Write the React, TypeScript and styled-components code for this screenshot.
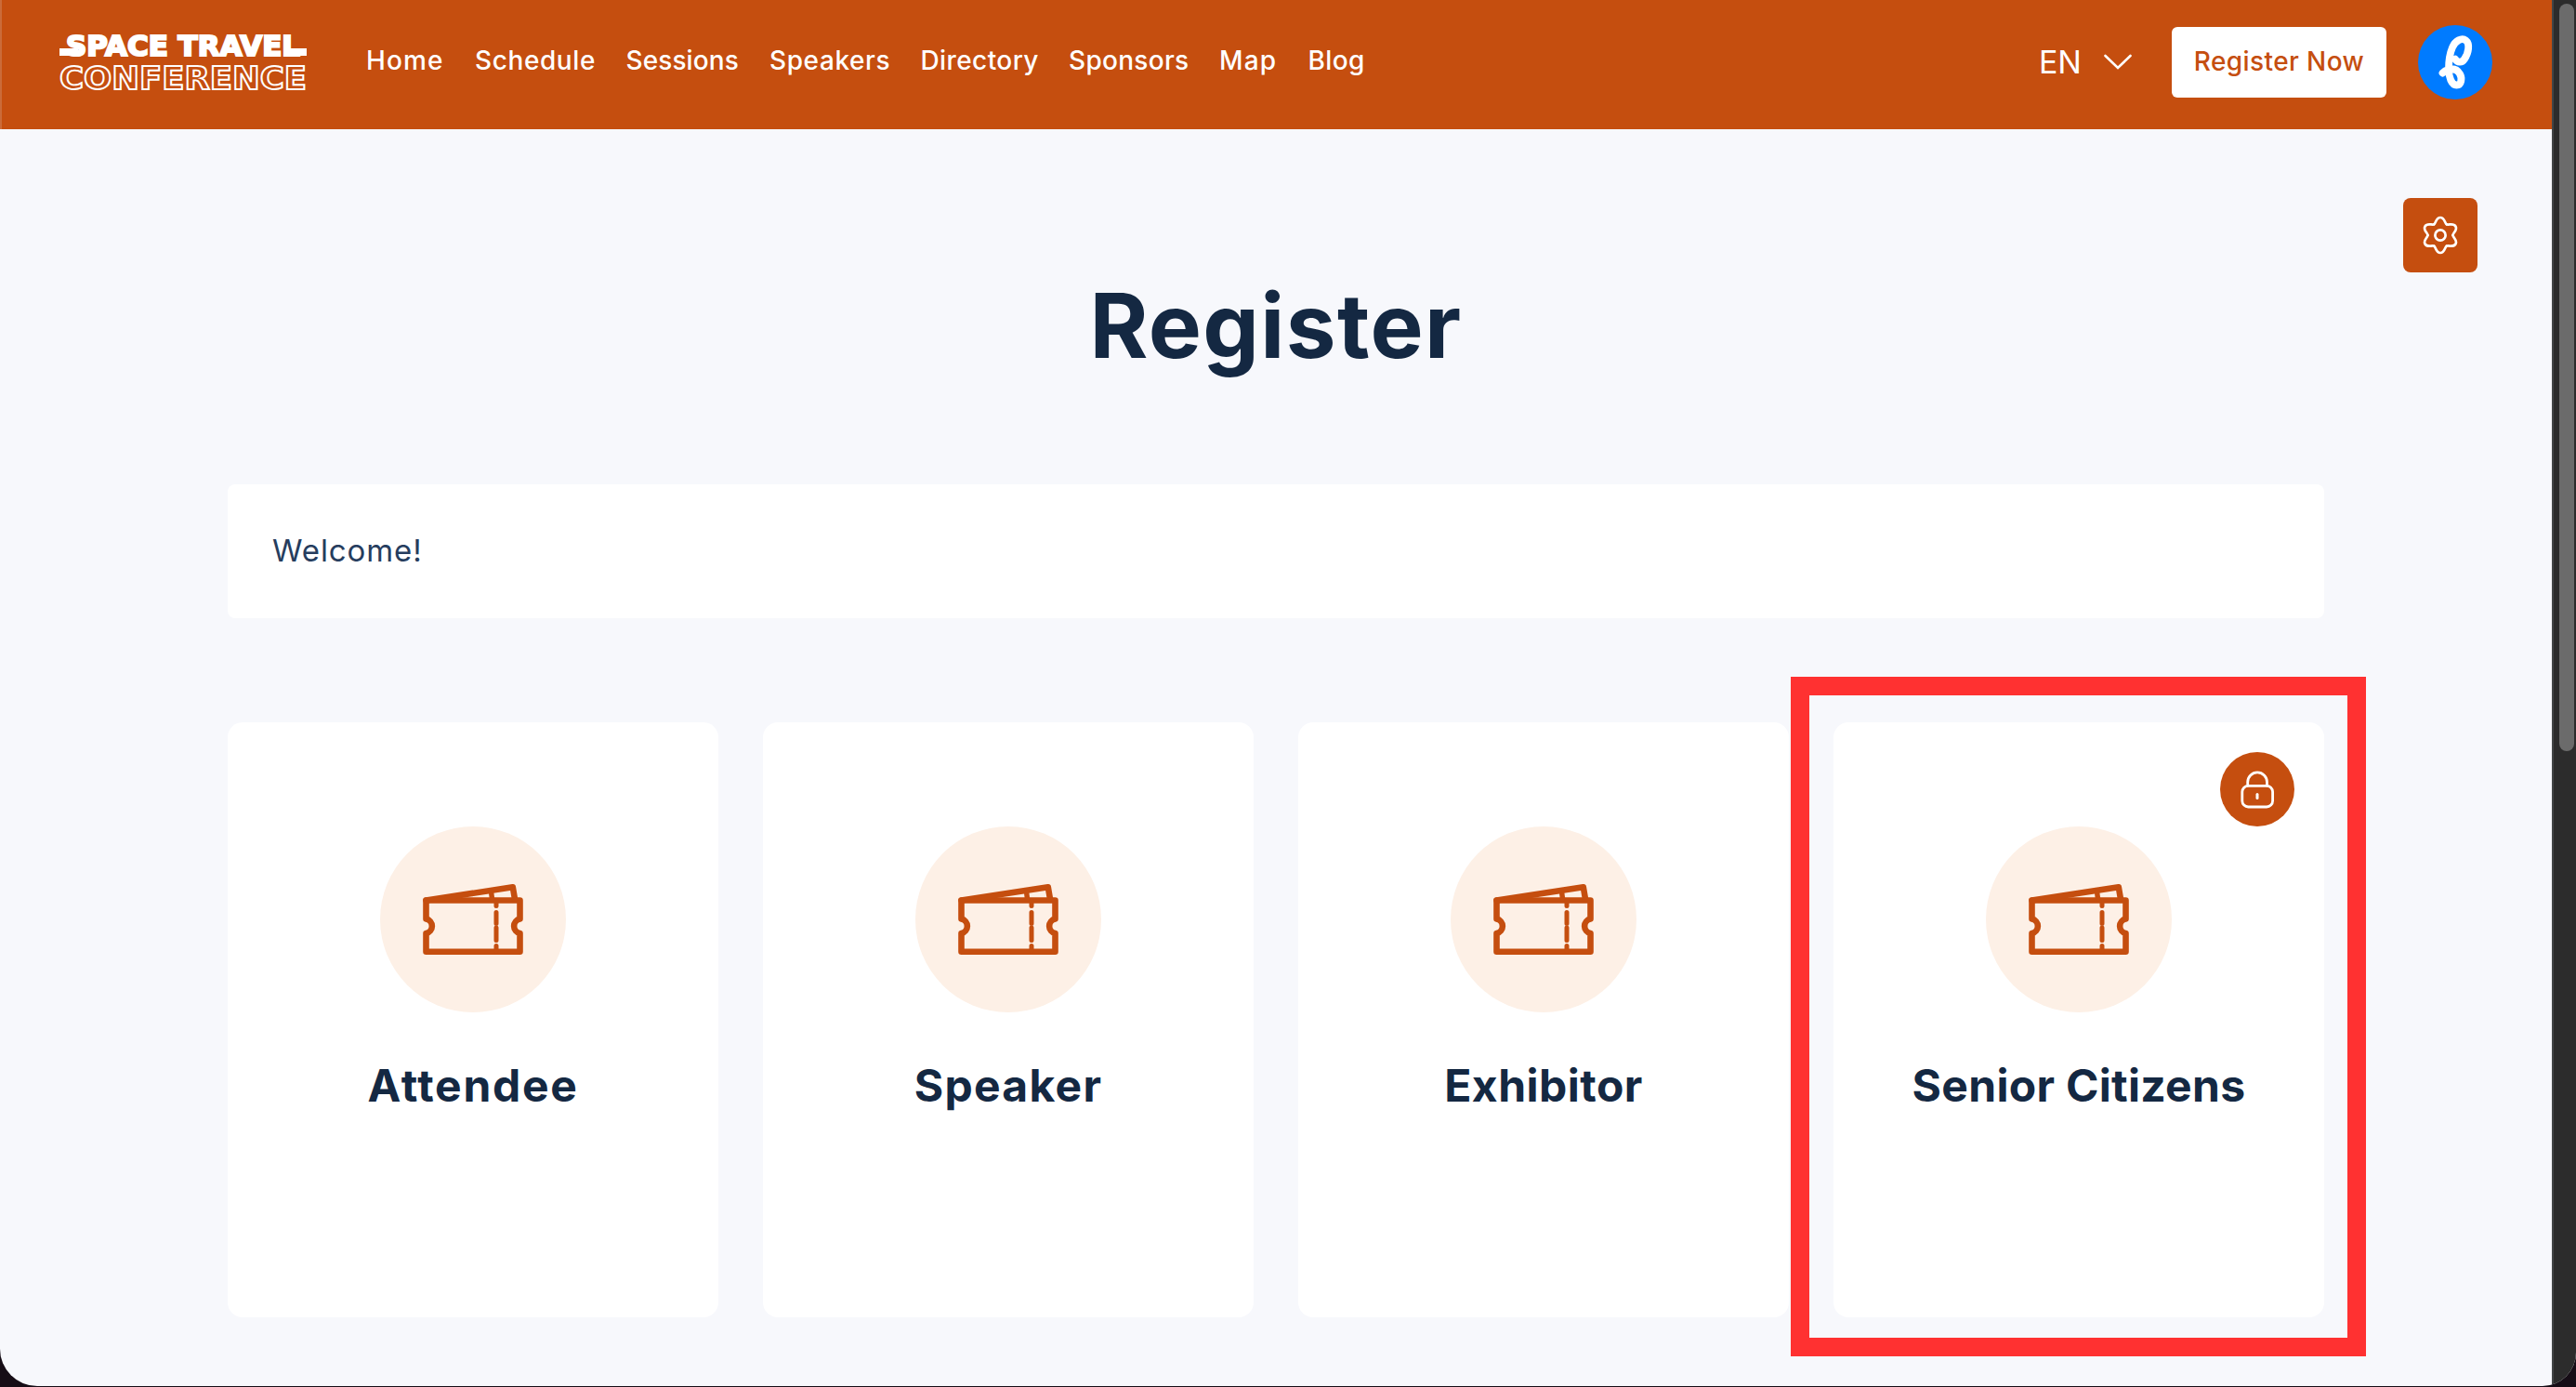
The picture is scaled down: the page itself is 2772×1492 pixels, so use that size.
import * as React from "react";
import styled, { createGlobalStyle } from "styled-components";

const colors = {
  rust: "#c54e0f",
  peach: "#fdf0e6",
  navy: "#142842",
  slate: "#263d5e",
  page: "#f7f8fc",
  highlight: "#ff3131"
};

const links = [
  { label: "Home", width: 85, tracking: 1.1 },
  { label: "Schedule", width: 130.5, tracking: 0.6 },
  { label: "Sessions", width: 122.5, tracking: 0.1 },
  { label: "Speakers", width: 130.5, tracking: 0.6 },
  { label: "Directory", width: 127.5, tracking: 0.4 },
  { label: "Sponsors", width: 130, tracking: 0.3 },
  { label: "Map", width: 63.5, tracking: 1.2 },
  { label: "Blog", width: 62, tracking: 0.4 }
];

const tickets = [
  { title: "Attendee", tracking: 1.7 },
  { title: "Speaker", tracking: 1.3 },
  { title: "Exhibitor", tracking: 0.5 },
  { title: "Senior Citizens", tracking: 0.3, locked: true }
];

const Logo = () => (
  <svg width="268" height="80" viewBox="63 27 268 80" fill="#fff">
    <text
      x="71"
      y="59.5"
      fontSize="30"
      textLength="252"
      lengthAdjust="spacingAndGlyphs"
      stroke="#fff"
      strokeWidth="2.2"
    >
      SPACE TRAVEL
    </text>
    <path d="M64 52H84V60H64ZM312 52H330V60H312Z" />
    <text
      x="64"
      y="96"
      fontSize="34"
      textLength="266"
      lengthAdjust="spacingAndGlyphs"
      fill={colors.rust}
      stroke="#fff"
      strokeWidth="1.9"
    >
      CONFERENCE
    </text>
  </svg>
);

const Avatar = () => (
  <svg width="80" height="80" viewBox="0 0 80 80" fill="none">
    <circle cx="40" cy="40" r="40" fill="#007bff" />
    <path
      d="M40 36.5C42.5 40.5 47 41 50 36.5C54.5 30 56 20 51.5 16.5C47 13 40 17 37 24C34 31 33 40 33 47C33 56 36 64.5 41.5 64.5C47 64.5 47.5 57 45 52.5C42 47.5 37 46.5 32 48C29 49 27.5 50.5 26.5 51.5"
      stroke="#fff"
      strokeWidth="7.8"
      strokeLinecap="round"
      strokeLinejoin="round"
    />
  </svg>
);

const GearIcon = () => (
  <svg width="44" height="44" viewBox="-22 -22 44 44" fill="none" stroke="#fff" strokeWidth="2.7" strokeLinecap="round">
    {[0, 60, 120, 180, 240, 300].map(angle => (
      <path
        key={angle}
        transform={`rotate(${angle})`}
        d="M-6.75 -11.7C-4.6 -13 -4.8 -19 0 -19C4.8 -19 4.6 -13 6.75 -11.7"
      />
    ))}
    <circle r="5.6" />
  </svg>
);

const LockIcon = () => (
  <svg width="80" height="80" viewBox="0 0 80 80" fill="none" stroke="#fff" strokeWidth="2.8" strokeLinecap="round">
    <rect x="23.8" y="36.3" width="32.8" height="22.7" rx="6.5" />
    <path d="M29.7 36V32.3a10.4 10.4 0 0 1 20.8 0V36" />
    <path d="M40 45.5V49.5" strokeWidth="3" />
  </svg>
);

const TicketIcon = () => (
  <svg
    width="200"
    height="200"
    viewBox="0 0 200 200"
    fill="none"
    stroke={colors.rust}
    strokeWidth="6.6"
    strokeLinecap="round"
    strokeLinejoin="round"
  >
    <path d="M49.5 79.5H150.5V99.5A7.9 7.9 0 0 0 150.5 115V134.7H49.5V115A7.9 7.9 0 0 0 49.5 99.5Z" />
    <path d="M49.5 79.5L142.8 65.3L145 78" />
    <path d="M119.5 70L120.5 78" strokeWidth="5.5" />
    <path d="M125 80V85.500M125 92.5V104.5M125 109V122.5M125 128.5V134" strokeWidth="5" />
  </svg>
);

const App = () => (
  <Browser>
    <GlobalStyle />
    <Page>
      <Header>
        <Logo />
        <Nav>
          {links.map(({ label, width, tracking }) => (
            <NavLink key={label} $width={width} $tracking={tracking}>
              {label}
            </NavLink>
          ))}
        </Nav>
        <Language>
          EN
          <svg width="30" height="18" viewBox="0 0 30 18" fill="none" stroke="#fff" strokeWidth="2.6">
            <path d="M1.5 2L15 15L28.5 2" strokeLinecap="round" />
          </svg>
        </Language>
        <RegisterButton>Register Now</RegisterButton>
        <Avatar />
      </Header>
      <Toolbar>
        <SettingsButton aria-label="Settings">
          <GearIcon />
        </SettingsButton>
      </Toolbar>
      <Title>Register</Title>
      <Content>
        <Welcome>Welcome!</Welcome>
        <Cards>
          {tickets.map(({ title, tracking, locked }) => (
            <Card key={title}>
              <TicketCircle>
                <TicketIcon />
              </TicketCircle>
              <CardTitle $tracking={tracking}>{title}</CardTitle>
              {locked && (
                <>
                  <LockBadge>
                    <LockIcon />
                  </LockBadge>
                  <Highlight />
                </>
              )}
            </Card>
          ))}
        </Cards>
      </Content>
    </Page>
    <Scrollbar>
      <Thumb />
    </Scrollbar>
  </Browser>
);

const GlobalStyle = createGlobalStyle`
  * {
    box-sizing: border-box;
  }
  body {
    margin: 0;
    overflow: hidden;
    background: #160d16;
    font-family: Inter, "Liberation Sans", sans-serif;
    color: ${colors.navy};
  }
  svg {
    display: block;
    flex-shrink: 0;
  }
`;

const Browser = styled.div`
  display: flex;
  width: 2772px;
  height: 1491px;
  overflow: hidden;
  border-radius: 0 0 36px 40px;
  background: ${colors.page};
`;

const Page = styled.div`
  width: 2746px;
  height: 100%;
`;

const Header = styled.header`
  display: flex;
  align-items: center;
  height: 139px;
  padding: 0 64px 5px 61px;
  border-left: 2px solid #cb6b39;
  background: ${colors.rust};
  color: #fff;

  text {
    font-family: "DejaVu Sans", sans-serif;
    font-weight: 700;
  }
`;

const Nav = styled.nav`
  display: flex;
  gap: 32px;
  margin-left: 63px;
  padding-bottom: 5px;
`;

const NavLink = styled.a<{ $width: number; $tracking: number }>`
  width: ${props => props.$width}px;
  font-size: 28px;
  font-weight: 500;
  line-height: 36px;
  letter-spacing: ${props => props.$tracking}px;
  white-space: nowrap;
`;

const Language = styled.div`
  display: flex;
  align-items: center;
  gap: 24px;
  margin-left: auto;
  font-size: 34px;
  line-height: 40px;
`;

const RegisterButton = styled.button`
  width: 231px;
  height: 76px;
  margin: 0 34px 0 43px;
  padding: 0 0 2px;
  border: 0;
  border-radius: 6px;
  background: #fff;
  color: ${colors.rust};
  font: 500 28px/36px Inter, "Liberation Sans", sans-serif;
  letter-spacing: 0.4px;
  white-space: nowrap;
`;

const Toolbar = styled.div`
  display: flex;
  justify-content: flex-end;
  padding: 74px 80px 0 0;
`;

const SettingsButton = styled.button`
  display: flex;
  align-items: center;
  justify-content: center;
  width: 80px;
  height: 80px;
  padding: 0;
  border: 0;
  border-radius: 8px;
  background: ${colors.rust};
`;

const Title = styled.h1`
  height: 120px;
  margin: -3px 0 111px;
  font-size: 96px;
  font-weight: 650;
  line-height: 120px;
  letter-spacing: 1.4px;
  text-align: center;
`;

const Content = styled.main`
  width: 2256px;
  margin: 0 auto;
`;

const Welcome = styled.section`
  display: flex;
  align-items: center;
  height: 144px;
  padding: 0 48px 2px;
  border-radius: 8px;
  background: #fff;
  color: ${colors.slate};
  font-size: 33px;
  letter-spacing: 0.9px;
`;

const Cards = styled.section`
  display: grid;
  grid-template-columns: repeat(4, 528px);
  gap: 48px;
  margin-top: 111.5px;
`;

const Card = styled.article`
  position: relative;
  display: flex;
  flex-direction: column;
  align-items: center;
  height: 640px;
  padding-top: 112px;
  border-radius: 16px;
  background: #fff;
`;

const TicketCircle = styled.div`
  width: 200px;
  height: 200px;
  border-radius: 50%;
  background: ${colors.peach};
`;

const CardTitle = styled.h2<{ $tracking: number }>`
  margin: 47px 0 0;
  font-size: 48px;
  font-weight: 650;
  line-height: 64px;
  letter-spacing: ${props => props.$tracking}px;
  white-space: nowrap;
`;

const LockBadge = styled.div`
  position: absolute;
  top: 32px;
  right: 32px;
  border-radius: 50%;
  background: ${colors.rust};
`;

const Highlight = styled.div`
  position: absolute;
  top: -48.5px;
  left: -46px;
  width: 619px;
  height: 731px;
  border: 20px solid ${colors.highlight};
`;

const Scrollbar = styled.div`
  width: 26px;
  height: 100%;
  padding: 4px 2px 0 6px;
  border-left: 2px solid #424546;
  background: #2c2c2c;
`;

const Thumb = styled.div`
  height: 804px;
  border-radius: 8px;
  background: #6b6b6b;
`;

export default App;
